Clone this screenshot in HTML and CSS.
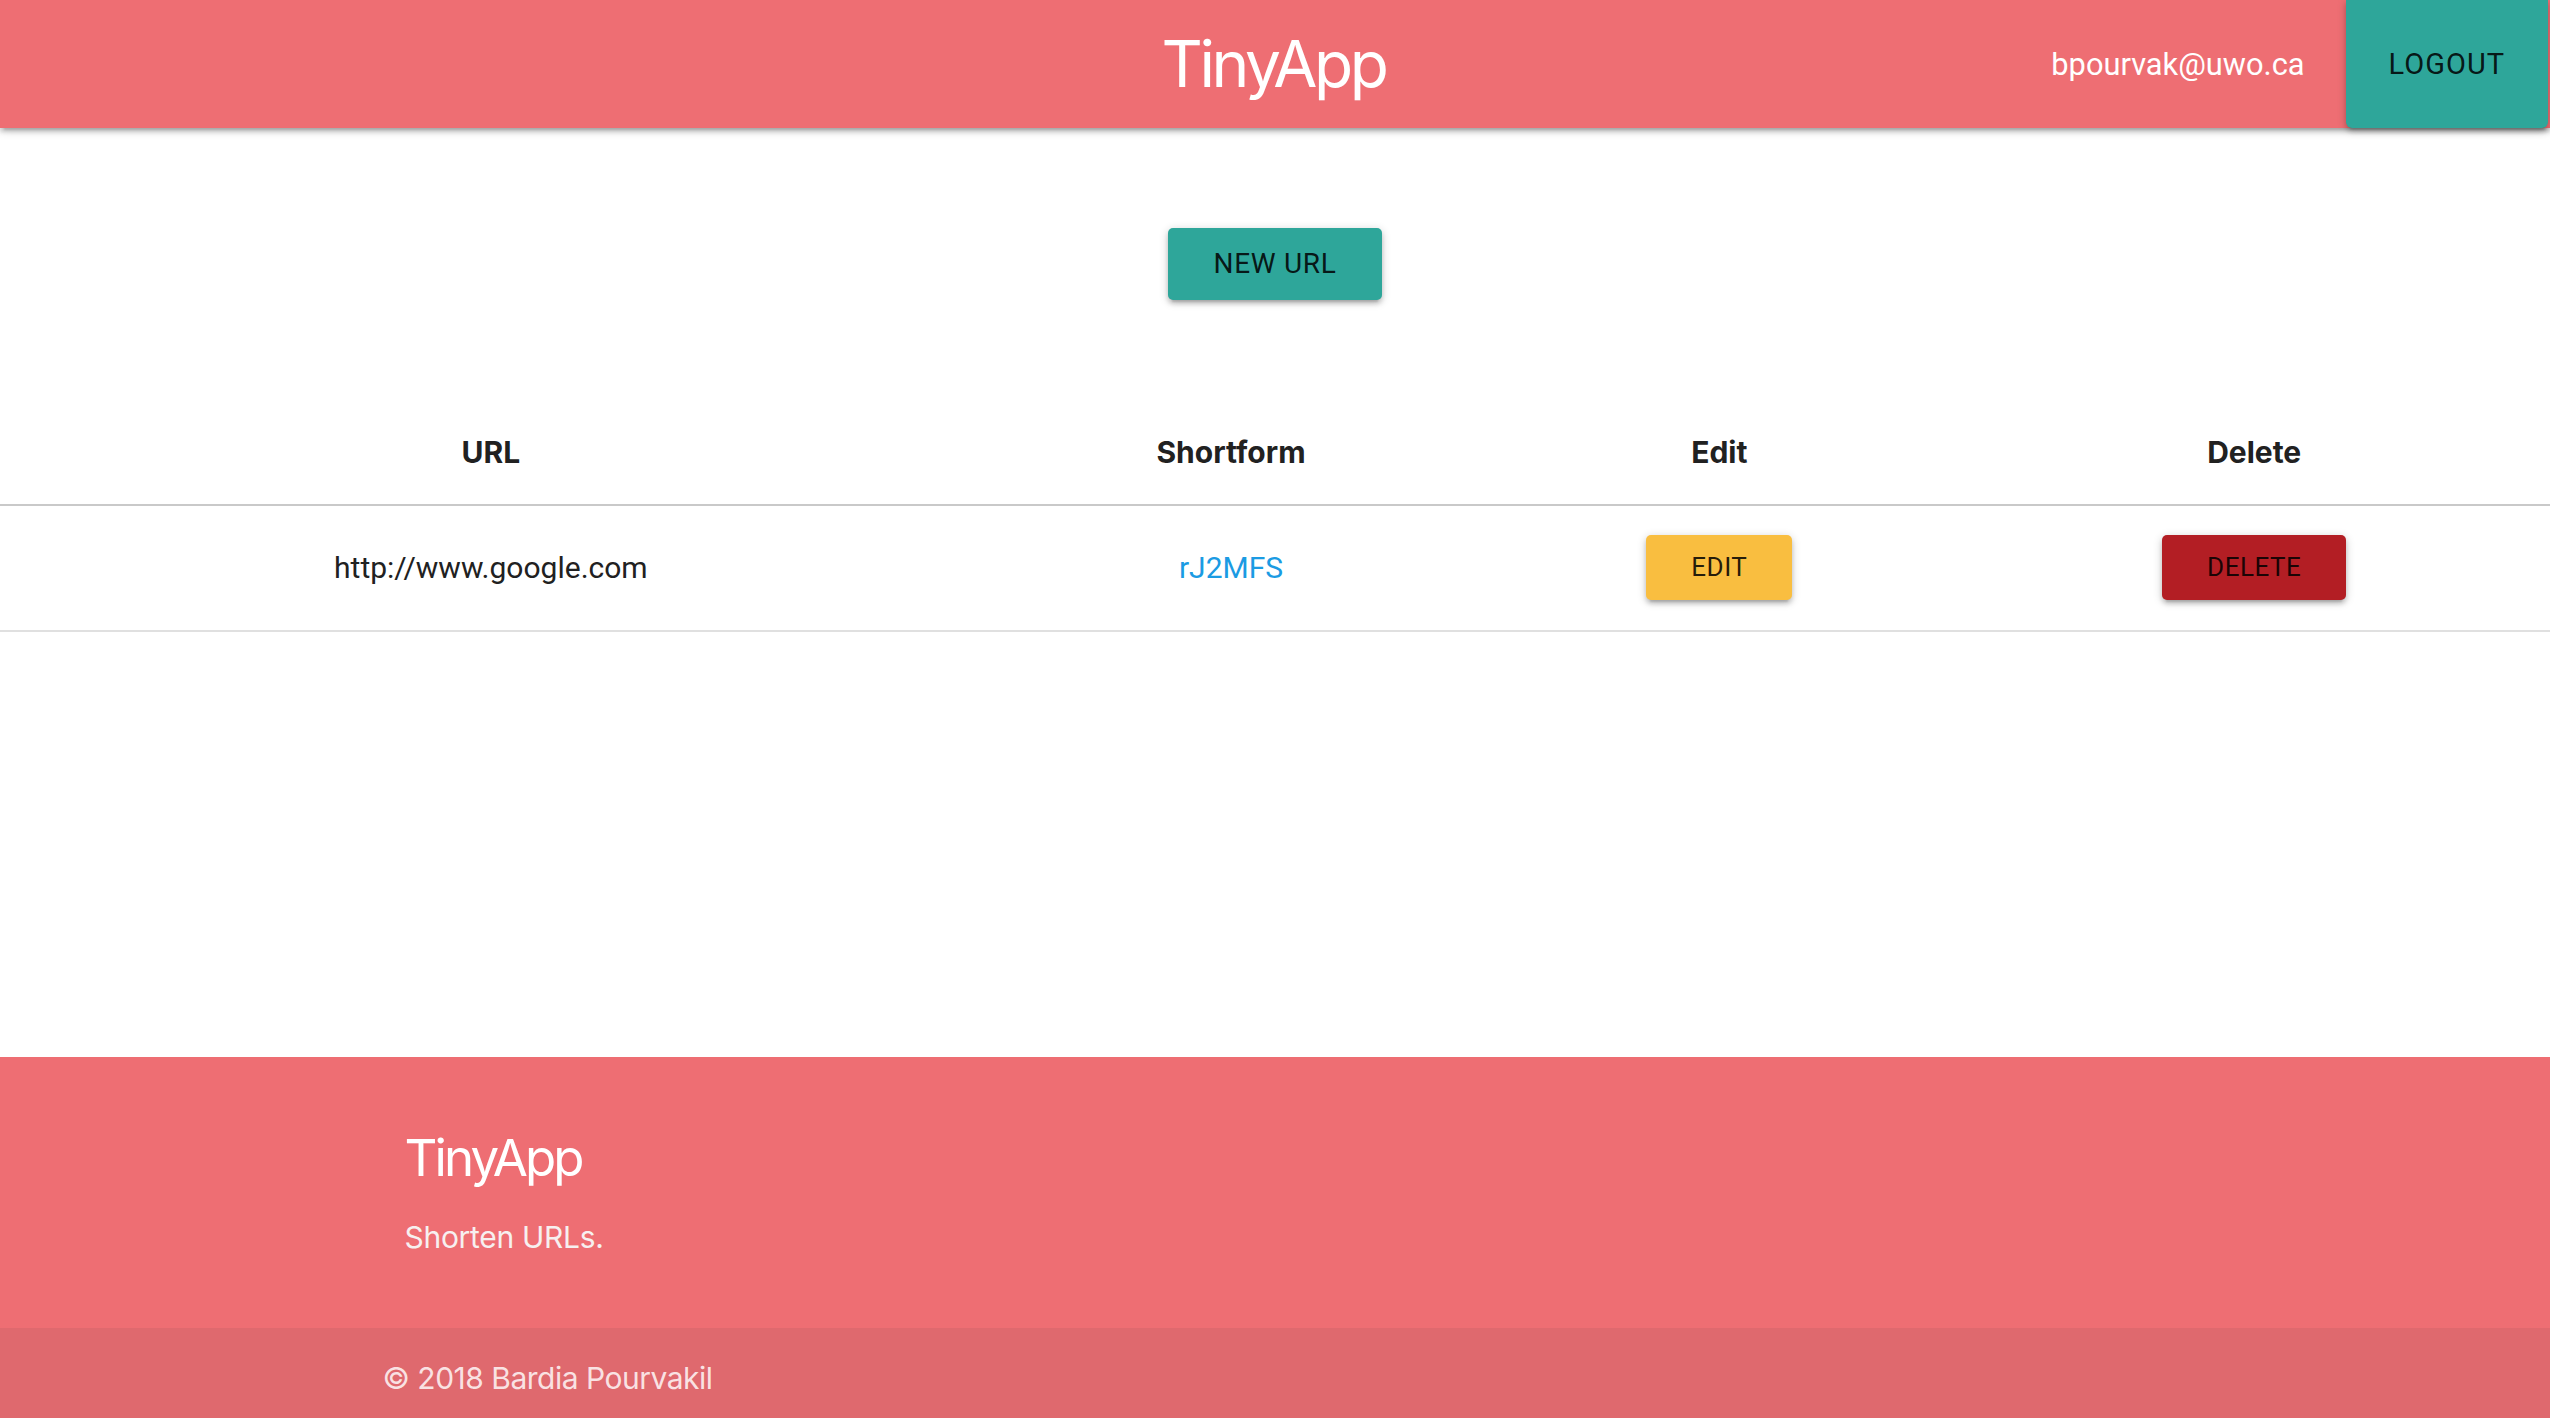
FILE: index.html
```html
<!DOCTYPE html>
<html lang="en">
<head>
<meta charset="utf-8">
<title>TinyApp</title>
<link rel="stylesheet" href="styles.css">
</head>
<body>
<nav class="nav">
  <div class="nav-side"></div>
  <a class="brand-logo" href="#">TinyApp</a>
  <ul class="nav-right">
    <li class="nav-user">bpourvak@uwo.ca</li>
    <li class="nav-item"><a class="btn btn-teal btn-nav" href="#">LOGOUT</a></li>
  </ul>
</nav>

<main class="main">
  <div class="actions">
    <a class="btn btn-teal btn-new" href="#">NEW URL</a>
  </div>

  <table class="url-table">
    <colgroup>
      <col class="col-url">
      <col class="col-short">
      <col class="col-edit">
      <col class="col-delete">
    </colgroup>
    <thead>
      <tr>
        <th>URL</th>
        <th>Shortform</th>
        <th>Edit</th>
        <th>Delete</th>
      </tr>
    </thead>
    <tbody>
      <tr>
        <td>http://www.google.com</td>
        <td><a class="short-link" href="#">rJ2MFS</a></td>
        <td><a class="btn btn-small btn-yellow" href="#">EDIT</a></td>
        <td><a class="btn btn-small btn-red" href="#">DELETE</a></td>
      </tr>
    </tbody>
  </table>
</main>

<footer class="page-footer">
  <div class="footer-main">
    <div class="container">
      <div class="footer-col">
        <h5 class="footer-title">TinyApp</h5>
        <p class="footer-text">Shorten URLs.</p>
      </div>
    </div>
  </div>
  <div class="footer-copyright">
    <div class="container">© 2018 Bardia Pourvakil</div>
  </div>
</footer>
</body>
</html>
```

FILE: styles.css
```css
html, body {
  margin: 0;
  padding: 0;
}

body {
  min-height: 100vh;
  display: flex;
  flex-direction: column;
  background: #ffffff;
  color: rgba(0, 0, 0, 0.87);
  font-family: "Roboto", "Liberation Sans", sans-serif;
}

a {
  text-decoration: none;
}

/* ---------- nav ---------- */
.nav {
  position: relative;
  z-index: 2;
  height: 128px;
  background: #ee6e73;
  display: grid;
  grid-template-columns: 1fr auto 1fr;
  align-items: stretch;
  box-shadow: 0 4px 4px 0 rgba(0, 0, 0, 0.14), 0 6px 2px -4px rgba(0, 0, 0, 0.12), 0 2px 10px 0 rgba(0, 0, 0, 0.2);
}

.brand-logo {
  font-family: "Inter", "Liberation Sans", sans-serif;
  font-size: 64px;
  line-height: 128px;
  letter-spacing: -3.4px;
  color: #ffffff;
  padding-right: 3px;
}

.nav-right {
  justify-self: end;
  list-style: none;
  margin: 0;
  padding: 0;
  display: flex;
  align-items: stretch;
}

.nav-user {
  font-family: "Roboto", "Liberation Sans", sans-serif;
  font-size: 30.8px;
  line-height: 128px;
  padding-top: 1px;
  color: #ffffff;
  margin-right: 41px;
}

.nav-item {
  display: flex;
  margin-right: 2px;
}

/* ---------- buttons ---------- */
.btn {
  display: inline-block;
  font-family: "Roboto", "Liberation Sans", sans-serif;
  color: rgba(0, 0, 0, 0.87);
  border-radius: 5px;
  text-align: center;
  white-space: nowrap;
  box-shadow: 0 4px 4px 0 rgba(0, 0, 0, 0.14), 0 6px 2px -4px rgba(0, 0, 0, 0.12), 0 2px 10px 0 rgba(0, 0, 0, 0.2);
}

.btn-teal {
  background: #2ea69a;
}

.btn-yellow {
  background: #f9be40;
}

.btn-red {
  background: #b31e24;
}

.btn-nav {
  height: 128px;
  line-height: 128px;
  font-size: 29px;
  letter-spacing: 1px;
  padding: 0 43px 0 43px;
  border-radius: 0 0 6px 6px;
}

.btn-new {
  height: 72px;
  line-height: 72px;
  font-size: 28px;
  letter-spacing: 0.7px;
  padding: 0 45px;
}

.btn-small {
  height: 65px;
  line-height: 65px;
  font-size: 26px;
  letter-spacing: 0.5px;
  padding: 0 45px;
  vertical-align: top;
}

/* ---------- main ---------- */
.main {
  flex: 1;
}

.actions {
  display: flex;
  justify-content: center;
  padding: 100px 0;
}

.url-table {
  width: 100%;
  border-collapse: collapse;
  table-layout: fixed;
}

.col-url { width: 38.5%; }
.col-short { width: 19.55%; }
.col-edit { width: 18.75%; }
.col-delete { width: 23.2%; }

.url-table th {
  font-family: "Inter", "Liberation Sans", sans-serif;
  font-weight: 700;
  font-size: 30px;
  line-height: 45px;
  padding: 30px 10px 29px;
  text-align: center;
  color: #212121;
  border-bottom: 2px solid #c9c9c9;
}

.url-table td {
  font-family: "Roboto", "Liberation Sans", sans-serif;
  font-size: 30px;
  line-height: 65px;
  padding: 29px 10px 30px;
  text-align: center;
  color: #212121;
  border-bottom: 2px solid #e0e0e0;
}

.short-link {
  color: #1b9be3;
}

/* ---------- footer ---------- */
.page-footer {
  background: #ee6e73;
  color: #ffffff;
  font-family: "Inter", "Liberation Sans", sans-serif;
}

.container {
  width: 70%;
  margin: 0 auto;
}

.footer-main {
  padding: 73px 0 68px;
}

.footer-col {
  padding: 0 22px;
}

.footer-title {
  margin: 0;
  font-size: 51px;
  font-weight: 400;
  line-height: 56px;
  letter-spacing: -2.9px;
}

.footer-text {
  margin: 29px 0 0;
  font-size: 30px;
  line-height: 45px;
  letter-spacing: -0.3px;
  color: #f7f0f0;
}

.footer-copyright {
  height: 90px;
  box-sizing: border-box;
  padding-top: 28px;
  background: rgba(51, 51, 51, 0.08);
  font-size: 30px;
  line-height: 45px;
  letter-spacing: -0.5px;
  color: rgba(255, 255, 255, 0.82);
}
```
